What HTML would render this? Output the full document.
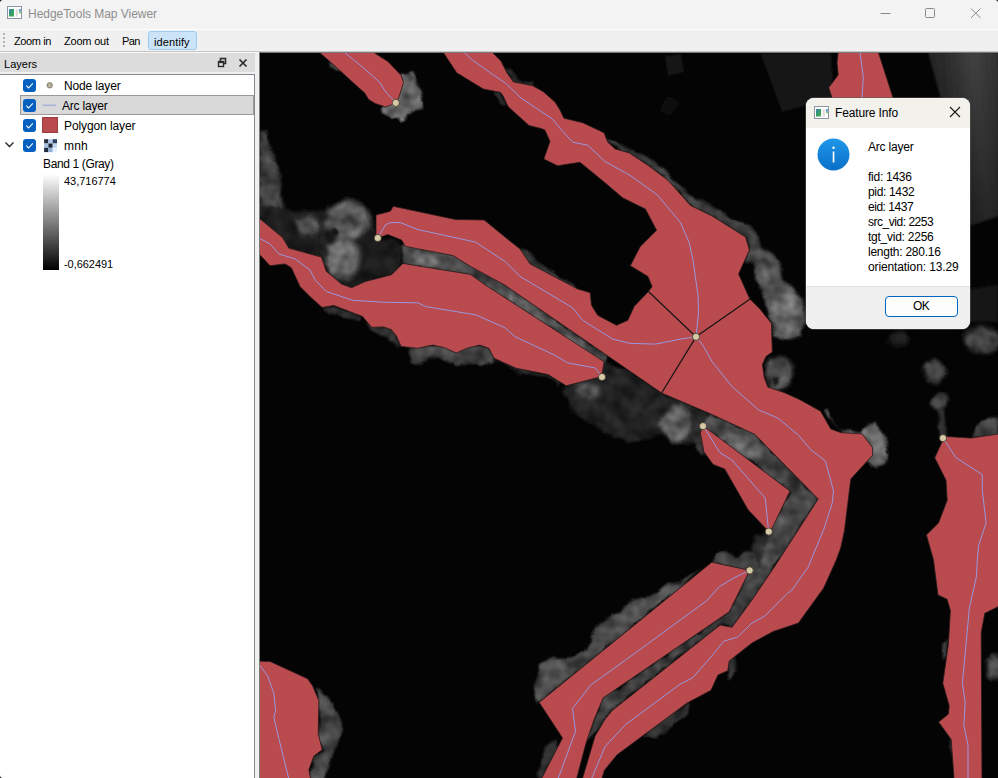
<!DOCTYPE html>
<html><head><meta charset="utf-8">
<style>
html,body{margin:0;padding:0;}
body{width:998px;height:778px;overflow:hidden;background:#f0f0f0;font-family:"Liberation Sans",sans-serif;font-size:12px;color:#000;position:relative;}
.abs{position:absolute;}
.t{position:absolute;white-space:nowrap;line-height:14px;font-size:12px;}#tb1,#tb2,#tb3,#tb4,#lh,#l6,#l7{font-size:11px}
#titlebar{left:0;top:0;width:998px;height:30px;background:#f3f3f3;}
#toolbar{left:0;top:29px;width:998px;height:21px;background:#f0f0f0;border-top:1px solid #fdfdfd;border-bottom:1px solid #c6c6c6;}
#tbsep{left:0;top:52px;width:259px;height:1px;background:#f6f6f6;}
#idbtn{left:148px;top:31px;width:47px;height:17px;background:#cce4f7;border:1px solid #9ccbf0;border-radius:3px;}
#layhdr{left:0;top:53px;width:255px;height:19px;background:#dcdcdc;}
#tree{left:0;top:74px;width:255px;height:706px;background:#fff;border:1px solid #828790;border-left:none;box-sizing:border-box;}
#sel{left:20px;top:95px;width:234px;height:20px;background:#d9d9d9;border:1px solid #9a9a9a;box-sizing:border-box;}
.cb{position:absolute;width:13px;height:13px;background:#0560c0;border-radius:3px;left:23px;}
.cb svg{position:absolute;left:0;top:0;}
#map{left:259px;top:52px;width:739px;height:726px;background:#040404;overflow:hidden;}
#dlg{left:806px;top:98px;width:164px;height:231px;border-radius:8px;background:#fff;overflow:hidden;box-shadow:0 0 0 1px rgba(90,90,90,0.55);}
#dlgtitle{left:0;top:0;width:164px;height:30px;background:#f3f1ec;}
#dlgfoot{left:0;top:188px;width:164px;height:43px;background:#f0f0f0;border-top:1px solid #dfdfdf;}
#okbtn{left:79px;top:198px;width:71px;height:19px;background:#fdfdfd;border:1px solid #0067c0;border-radius:4px;}
/*LS*/#title{letter-spacing:-0.041px}#tb1{letter-spacing:-0.393px}#tb2{letter-spacing:-0.209px}#tb3{letter-spacing:-0.626px}#tb4{letter-spacing:0.105px}#lh{letter-spacing:0.011px}#l1{letter-spacing:-0.143px}#l2{letter-spacing:-0.194px}#l3{letter-spacing:-0.101px}#l4{letter-spacing:0.219px}#l5{letter-spacing:-0.367px}#l6{letter-spacing:-0.022px}#l7{letter-spacing:-0.050px}#dt{letter-spacing:-0.135px}#d0{letter-spacing:-0.194px}#d1{letter-spacing:-0.261px}#d2{letter-spacing:-0.343px}#d3{letter-spacing:-0.466px}#d4{letter-spacing:-0.475px}#d5{letter-spacing:-0.248px}#d6{letter-spacing:-0.248px}#d7{letter-spacing:-0.119px}#ok{letter-spacing:-0.672px}/*ELS*/</style></head><body>
<div id="titlebar" class="abs"></div>
<svg class="abs" style="left:0;top:0" width="4" height="4"><path d="M0 0H3Q0 0 0 3Z" fill="#111"/></svg><svg class="abs" style="left:994px;top:0" width="4" height="4"><path d="M4 0H1Q4 0 4 3Z" fill="#111"/></svg><svg class="abs" style="left:0;top:774px;z-index:5" width="4" height="4"><path d="M0 4H3Q0 4 0 1Z" fill="#111"/></svg>
<svg class="abs" style="left:7px;top:6px" width="15" height="13" viewBox="0 0 15 13">
<defs><linearGradient id="ig" x1="0" y1="0" x2="1" y2="1"><stop offset="0" stop-color="#4a7fc0"/><stop offset="0.45" stop-color="#2f9a6a"/><stop offset="1" stop-color="#4cae50"/></linearGradient></defs>
<rect x="0.5" y="0.5" width="14" height="12" fill="#fff" stroke="#8c95a3"/><rect x="2" y="3" width="5" height="7.5" fill="url(#ig)"/><rect x="8.6" y="3" width="2.2" height="7.5" fill="#dcdcdc"/><rect x="12" y="3" width="1.8" height="4" fill="#5b9bd0"/><rect x="12" y="5.5" width="1.8" height="2" fill="#8ccf7a"/></svg>
<div class="t" id="title" style="left:28px;top:7px;color:#8d8d8d;font-size:12px">HedgeTools Map Viewer</div>
<svg class="abs" style="left:870px;top:0" width="128" height="30" fill="none" stroke="#8a8a8a" stroke-width="1">
<path d="M10.5 13.5H20.5"/><rect x="55.500" y="8.500" width="9" height="9" rx="1"/><path d="M101 8.500L110.500 18M110.500 8.500L101 18"/></svg>
<div id="toolbar" class="abs"></div><div id="tbsep" class="abs"></div>
<svg class="abs" style="left:2px;top:32px" width="4" height="16"><g fill="#b4b4b4"><rect x="1" y="1" width="2" height="2"/><rect x="1" y="5" width="2" height="2"/><rect x="1" y="9" width="2" height="2"/><rect x="1" y="13" width="2" height="2"/></g></svg>
<div id="idbtn" class="abs"></div>
<div class="t" id="tb1" style="left:14px;top:34px">Zoom in</div>
<div class="t" id="tb2" style="left:64px;top:34px">Zoom out</div>
<div class="t" id="tb3" style="left:122px;top:34px">Pan</div>
<div class="t" id="tb4" style="left:154px;top:35px">identify</div>
<div id="layhdr" class="abs"></div>
<div class="t" id="lh" style="left:4px;top:57px">Layers</div>
<svg class="abs" style="left:217px;top:57px" width="32" height="11" fill="none" stroke="#2b2b2b"><rect x="3.500" y="1.500" width="5" height="5" stroke-width="1.600"/><rect x="1.500" y="4.500" width="5" height="5" fill="#dcdcdc" stroke-width="1.400"/><path d="M2 5.300H6" stroke-width="1.600"/><path d="M22.500 2.500L29.500 9.500M29.500 2.500L22.500 9.500" stroke-width="1.700"/></svg>
<div id="tree" class="abs"></div>
<div id="sel" class="abs"></div>
<div class="cb" style="top:79px"><svg width="13" height="13"><path d="M3.300 6.700L5.600 9L9.800 4.300" fill="none" stroke="#fff" stroke-width="1.100"/></svg></div>
<div class="cb" style="top:99px"><svg width="13" height="13"><path d="M3.300 6.700L5.600 9L9.800 4.300" fill="none" stroke="#fff" stroke-width="1.100"/></svg></div>
<div class="cb" style="top:119px"><svg width="13" height="13"><path d="M3.300 6.700L5.600 9L9.800 4.300" fill="none" stroke="#fff" stroke-width="1.100"/></svg></div>
<div class="cb" style="top:139px"><svg width="13" height="13"><path d="M3.300 6.700L5.600 9L9.800 4.300" fill="none" stroke="#fff" stroke-width="1.100"/></svg></div>
<svg class="abs" style="left:4px;top:140px" width="12" height="10"><path d="M1.500 2.500L5.500 6.500L9.500 2.500" fill="none" stroke="#222" stroke-width="1.300"/></svg>
<svg class="abs" style="left:40px;top:76px" width="20" height="78">
<circle cx="9.700" cy="9.300" r="2.700" fill="#b8b095" stroke="#7d7a70" stroke-width="0.900"/>
<path d="M2.500 29.300H16" stroke="#aab2da" stroke-width="1.600"/>
<rect x="2.500" y="41.500" width="15" height="15" fill="#b94a4e" stroke="#9a3c40"/>
<g><rect x="4.100" y="63.200" width="4.300" height="4.300" fill="#243040"/><rect x="8.400" y="63.200" width="4.300" height="4.300" fill="#b0c8e8"/><rect x="12.700" y="63.200" width="4.300" height="4.300" fill="#2a4060"/><rect x="4.100" y="67.500" width="4.300" height="4.300" fill="#a8c0e0"/><rect x="8.400" y="67.500" width="4.300" height="4.300" fill="#1a2535"/><rect x="12.700" y="67.500" width="4.300" height="4.300" fill="#c0d4f0"/><rect x="4.100" y="71.800" width="4.300" height="4.300" fill="#1e2c40"/><rect x="8.400" y="71.800" width="4.300" height="4.300" fill="#90acd8"/><rect x="12.700" y="71.800" width="4.300" height="4.300" fill="#e8f0fc"/></g>
</svg>
<div class="t" id="l1" style="left:64px;top:79px">Node layer</div>
<div class="t" id="l2" style="left:62px;top:99px">Arc layer</div>
<div class="t" id="l3" style="left:64px;top:119px">Polygon layer</div>
<div class="t" id="l4" style="left:64px;top:139px">mnh</div>
<div class="t" id="l5" style="left:43px;top:157px">Band 1 (Gray)</div>
<div class="abs" style="left:43px;top:174px;width:16px;height:96px;background:linear-gradient(#ffffff,#000000)"></div>
<div class="t" id="l6" style="left:64px;top:174px">43,716774</div>
<div class="t" id="l7" style="left:64px;top:257px">-0,662491</div>
<div id="map" class="abs">
<svg id="mapsvg" class="abs" style="left:0;top:0" width="739" height="726" viewBox="259 52 739 726">
<defs>
<filter id="b0_8" x="-20%" y="-20%" width="140%" height="140%"><feGaussianBlur stdDeviation="0.8"/></filter>
<filter id="b0_9" x="-20%" y="-20%" width="140%" height="140%"><feGaussianBlur stdDeviation="0.9"/></filter>
<filter id="b1_0" x="-20%" y="-20%" width="140%" height="140%"><feGaussianBlur stdDeviation="1.0"/></filter>
<filter id="b1_2" x="-20%" y="-20%" width="140%" height="140%"><feGaussianBlur stdDeviation="1.2"/></filter>
<filter id="b1_5" x="-20%" y="-20%" width="140%" height="140%"><feGaussianBlur stdDeviation="1.5"/></filter>
<filter id="b1_6" x="-20%" y="-20%" width="140%" height="140%"><feGaussianBlur stdDeviation="1.6"/></filter>
<filter id="b2_0" x="-20%" y="-20%" width="140%" height="140%"><feGaussianBlur stdDeviation="2.0"/></filter>
<linearGradient id="roof" gradientUnits="userSpaceOnUse" x1="927" y1="60" x2="1010" y2="52"><stop offset="0" stop-color="#242424"/><stop offset="0.25" stop-color="#2e2e2e"/><stop offset="0.55" stop-color="#424242"/><stop offset="0.72" stop-color="#383838"/><stop offset="1" stop-color="#2c2c2c"/></linearGradient><linearGradient id="roofv" x1="0" y1="0" x2="0" y2="1"><stop offset="0" stop-color="#000" stop-opacity="0"/><stop offset="1" stop-color="#000" stop-opacity="0.45"/></linearGradient>
</defs>
<filter id="tex" filterUnits="userSpaceOnUse" x="259" y="52" width="739" height="726" color-interpolation-filters="sRGB"><feTurbulence type="fractalNoise" baseFrequency="0.07" numOctaves="2" seed="7" result="n"/><feColorMatrix in="n" type="matrix" values="1.4 0 0 0 -0.2  1.4 0 0 0 -0.2  1.4 0 0 0 -0.2  0 0 0 0 1" result="g"/><feDisplacementMap in="SourceGraphic" in2="n" scale="7" xChannelSelector="R" yChannelSelector="G" result="d"/><feComposite in="d" in2="g" operator="arithmetic" k1="0.9" k2="0.55" k3="0" k4="0"/></filter>
<polygon points="928,52 999,52 999,216 970,226 958,180 941,99" fill="url(#roof)" filter="url(#b0_8)"/><polygon points="926,52 999,52 999,218 970,228 958,180 939,99" fill="url(#roofv)"/>
<polygon points="760.0,53.0 831.0,53.0 834.0,98.0 782.0,112.0" fill="#121212" filter="url(#b1_0)"/>
<polygon points="665.0,56.0 681.0,54.0 684.0,72.0 668.0,76.0" fill="#141414" filter="url(#b0_8)"/>
<polygon points="668.0,96.0 680.0,102.0 670.0,116.0 659.0,110.0" fill="#111111" filter="url(#b0_8)"/>
<polygon points="965.0,290.0 998.0,285.0 998.0,322.0 968.0,322.0" fill="#181818" filter="url(#b1_5)"/>
<g filter="url(#tex)"><rect x="259" y="52" width="739" height="726" fill="#040404" fill-opacity="0"/>
<polygon points="382.3,107.3 383.0,113.8 390.8,119.0 399.9,117.7 401.2,122.3 405.7,121.6 406.4,113.8 414.2,111.2 422.0,109.9 423.3,104.7 420.7,90.4 415.5,83.9 414.2,72.8 411.0,70.8 406.4,76.0 401.2,74.7 398.0,90.0" fill="#686868" filter="url(#b0_9)"/>
<polygon points="328.0,61.0 332.0,67.0 340.0,72.0 343.0,70.0 336.0,62.0" fill="#3c3c3c" filter="url(#b0_8)"/>
<polygon points="259.0,131.0 266.0,131.0 270.0,150.0 278.0,165.0 281.0,195.0 284.0,208.0 275.0,214.0 259.0,212.0" fill="#444444" filter="url(#b1_5)"/>
<polygon points="259.0,205.0 285.0,207.0 300.0,212.0 325.0,210.0 330.0,262.0 300.0,262.0 259.0,225.0" fill="#1c1c1c" filter="url(#b1_5)"/>
<ellipse cx="308" cy="225" rx="13" ry="10" fill="#505050" filter="url(#b2_0)"/>
<polygon points="322.0,215.0 335.0,203.0 345.0,198.0 360.0,200.0 370.0,210.0 375.0,225.0 376.0,240.0 390.0,238.0 403.0,245.0 400.0,268.0 392.0,276.0 365.0,283.0 350.0,290.0 335.0,283.0 322.0,265.0" fill="#1e1e1e" filter="url(#b1_5)"/>
<ellipse cx="348" cy="221" rx="22" ry="19" fill="#5c5c5c" filter="url(#b2_0)"/>
<ellipse cx="343" cy="258" rx="17" ry="21" fill="#606060" filter="url(#b2_0)"/>
<ellipse cx="334" cy="233" rx="4" ry="3" fill="#1c1c1c" filter="url(#b1_2)"/>
<polygon points="403.0,244.0 455.0,254.0 472.0,265.0 505.0,284.0 608.0,357.0 604.0,364.0 505.0,299.0 486.0,287.0 470.0,276.0 403.0,264.0" fill="#484848" filter="url(#b1_0)"/>
<ellipse cx="426" cy="259" rx="14" ry="6" fill="#666666" filter="url(#b1_5)" transform="rotate(15 426 259)"/>
<ellipse cx="520" cy="303" rx="12" ry="5" fill="#646464" filter="url(#b1_5)" transform="rotate(35 520 303)"/>
<ellipse cx="575" cy="342" rx="12" ry="5" fill="#606060" filter="url(#b1_5)" transform="rotate(35 575 342)"/>
<polygon points="408.0,346.0 412.0,362.0 420.0,365.0 428.0,358.0 436.0,356.0 445.0,360.0 455.0,366.0 470.0,364.0 480.0,366.0 494.0,362.0 496.0,358.0 489.0,346.0" fill="#404040" filter="url(#b1_2)"/>
<polygon points="366.0,322.0 372.0,332.0 385.0,336.0 397.0,344.0 401.0,346.0 396.0,334.0 390.0,328.0" fill="#333333" filter="url(#b1_0)"/>
<polygon points="322.0,307.0 328.0,314.0 345.0,318.0 362.0,321.0 362.0,316.0 334.0,305.0" fill="#2a2a2a" filter="url(#b1_0)"/>
<polygon points="494.0,358.0 520.0,374.0 545.0,378.0 560.0,386.0 560.0,380.0 520.0,368.0" fill="#262626" filter="url(#b1_0)"/>
<polygon points="566.0,386.0 604.0,362.0 628.0,370.0 661.0,392.0 710.0,414.0 703.0,426.0 707.0,458.0 699.0,443.0 672.0,444.0 663.0,434.0 628.0,443.0 573.0,414.0 562.0,390.0" fill="#202020" filter="url(#b1_6)"/>
<ellipse cx="588" cy="390" rx="12" ry="8" fill="#5a5a5a" filter="url(#b2_0)"/>
<ellipse cx="676" cy="424" rx="16" ry="18" fill="#5e5e5e" filter="url(#b2_0)"/>
<polygon points="690.0,417.0 703.0,424.0 704.0,456.0 698.0,450.0 692.0,435.0" fill="#303030" filter="url(#b1_2)"/>
<polygon points="703.0,426.0 710.0,413.5 755.0,434.0 818.0,499.0 759.0,590.0 743.0,590.0 750.0,570.0 769.0,532.0 790.0,491.0" fill="#444444" filter="url(#b1_0)"/>
<ellipse cx="744" cy="446" rx="20" ry="9" fill="#666666" filter="url(#b2_0)" transform="rotate(32 744 446)"/>
<ellipse cx="795" cy="480" rx="8" ry="8" fill="#2a2a2a" filter="url(#b2_0)"/>
<polygon points="755.0,535.0 770.0,532.0 760.0,568.0 748.0,566.0" fill="#262626" filter="url(#b1_5)"/>
<polygon points="712.0,563.0 716.0,555.0 725.0,552.0 735.0,556.0 745.0,552.0 755.0,556.0 760.0,565.0 750.0,571.0" fill="#3c3c3c" filter="url(#b1_0)"/>
<polygon points="822.0,410.0 827.0,407.0 832.0,420.0 840.0,430.0 862.0,432.0 865.0,425.0 875.0,424.0 880.0,430.0 886.0,438.0 889.0,455.0 885.0,465.0 876.0,468.0 868.0,462.0" fill="#5c5c5c" filter="url(#b1_0)"/>
<ellipse cx="940" cy="400" rx="8" ry="8" fill="#3c3c3c" filter="url(#b1_5)"/>
<polygon points="937.0,408.0 944.0,408.0 946.0,436.0 940.0,436.0" fill="#333333" filter="url(#b1_0)"/>
<polygon points="972.0,438.0 978.0,425.0 988.0,418.0 999.0,415.0 999.0,438.0" fill="#3c3c3c" filter="url(#b1_2)"/>
<polygon points="606.0,138.0 614.0,140.0 622.0,146.0 632.0,148.0 650.0,160.0 665.0,168.0 672.0,178.0 688.0,194.0 700.0,200.0 718.0,210.0 730.0,218.0 745.0,226.0 752.0,238.0 748.0,240.0 713.0,217.0 690.0,205.0 668.0,180.0 648.0,165.0 629.0,153.0 615.0,149.0 608.0,142.0" fill="#3c3c3c" filter="url(#b0_9)"/>
<polygon points="735.0,222.0 750.0,225.0 758.0,235.0 762.0,250.0 756.0,264.0 745.0,264.0 750.0,250.0 746.0,237.0 720.0,220.0" fill="#3a3a3a" filter="url(#b1_0)"/>
<polygon points="753.0,252.0 762.0,248.0 772.0,252.0 780.0,262.0 782.0,280.0 792.0,286.0 803.0,300.0 806.0,320.0 800.0,336.0 788.0,340.0 775.0,334.0 768.0,318.0 766.0,300.0 760.0,286.0 754.0,272.0" fill="#505050" filter="url(#b1_5)"/>
<ellipse cx="786" cy="312" rx="14" ry="19" fill="#6c6c6c" filter="url(#b2_0)"/>
<ellipse cx="768" cy="266" rx="8" ry="10" fill="#5c5c5c" filter="url(#b2_0)"/>
<ellipse cx="779" cy="373" rx="14" ry="17" fill="#505050" filter="url(#b2_0)"/>
<ellipse cx="776" cy="380" rx="4" ry="4" fill="#1a1a1a" filter="url(#b1_0)"/>
<polygon points="518.0,247.0 530.0,250.0 535.0,262.0 560.0,276.0 578.0,287.0 575.0,291.0 540.0,273.0 528.0,267.0" fill="#383838" filter="url(#b0_8)"/>
<polygon points="506.0,66.0 512.0,70.0 518.0,80.0 534.0,83.0 533.0,88.0 513.0,84.0" fill="#2c2c2c" filter="url(#b0_8)"/>
<polygon points="492.0,91.0 500.0,92.0 506.0,104.0 503.0,106.0 497.0,98.0" fill="#2c2c2c" filter="url(#b0_8)"/>
<ellipse cx="982" cy="340" rx="18" ry="13" fill="#464646" filter="url(#b2_0)"/>
<ellipse cx="935" cy="372" rx="11" ry="11" fill="#4a4a4a" filter="url(#b2_0)"/>
<ellipse cx="898" cy="339" rx="12" ry="8" fill="#1c1c1c" filter="url(#b2_0)"/>
<polygon points="316.0,688.0 322.0,690.0 330.0,700.0 338.0,715.0 343.0,730.0 336.0,745.0 330.0,760.0 325.0,779.0 310.0,779.0 314.0,756.0 322.0,750.0 318.0,733.0 319.0,700.0" fill="#4a4a4a" filter="url(#b1_0)"/>
<polygon points="539.0,703.0 711.0,562.0 695.4,573.8 680.4,581.4 665.4,585.1 655.3,595.1 640.3,597.6 627.8,602.7 620.3,612.7 610.2,615.2 595.2,626.5 591.4,640.3 585.2,651.5 570.1,657.8 550.1,657.8 540.1,665.3 532.5,682.9 535.0,696.6" fill="#484848" filter="url(#b0_9)"/>
<polygon points="603.0,698.0 729.0,612.0 750.0,571.0 760.0,590.0 752.0,600.0 732.0,627.0 720.0,625.0 610.0,711.0 597.0,731.0 586.0,742.0 594.0,720.0" fill="#3c3c3c" filter="url(#b1_0)"/>
<polygon points="650.0,725.0 690.0,702.0 688.0,715.0 670.0,728.0 655.0,738.0 645.0,735.0" fill="#333333" filter="url(#b1_0)"/>
<polygon points="727.0,660.0 734.0,655.0 736.0,672.0 730.0,680.0" fill="#333333" filter="url(#b1_0)"/>
<polygon points="545.0,745.0 556.0,740.0 560.0,750.0 548.0,779.0 538.0,779.0" fill="#2e2e2e" filter="url(#b1_2)"/>
<ellipse cx="995" cy="667" rx="8" ry="12" fill="#444444" filter="url(#b2_0)"/>
<polygon points="942.0,644.0 948.0,640.0 947.0,655.0 943.0,660.0" fill="#3a3a3a" filter="url(#b0_8)"/>
<polygon points="950.0,740.0 955.0,735.0 956.0,760.0 952.0,762.0" fill="#3a3a3a" filter="url(#b0_8)"/>
</g>
<g fill="#b94a4e" stroke="#2a1a1a" stroke-width="0.8" stroke-linejoin="round">
<polygon points="319.0,52.0 336.0,66.9 353.0,82.6 364.7,93.0 368.6,99.5 375.1,103.4 385.6,107.0 392.0,104.7 396.0,102.8 398.6,98.2 403.5,82.6 401.2,75.4 388.2,61.7 373.0,52.0"/>
<polygon points="492.0,52.0 501.0,61.1 506.9,72.8 513.4,81.9 532.9,85.8 543.3,91.7 555.0,102.1 560.0,109.9 563.9,118.2 582.7,122.7 604.0,132.7 607.8,142.2 615.3,149.0 629.0,152.8 647.9,165.3 668.0,180.3 690.5,205.4 713.0,216.5 745.6,237.0 749.4,250.1 738.6,273.9 749.8,298.9 759.7,308.8 771.4,323.2 772.3,352.0 766.0,356.5 762.4,364.6 764.2,377.2 767.8,387.1 784.0,392.5 800.0,399.7 820.7,411.3 830.7,428.9 840.7,432.6 862.0,433.9 872.6,447.7 872.6,455.2 850.8,479.0 844.5,530.4 840.7,547.9 836.3,560.0 823.7,588.0 798.4,623.1 773.2,631.5 752.0,643.0 729.2,660.9 727.8,670.7 718.0,674.9 711.0,690.3 687.2,702.9 617.1,754.8 604.5,770.2 601.7,779.0 582.3,779.0 595.2,735.8 605.1,719.2 611.9,710.8 720.2,625.0 732.0,627.3 752.0,600.0 775.0,566.0 818.2,499.0 754.8,434.3 709.7,413.5 661.6,393.0 505.0,285.2 470.5,266.4 453.0,255.6 405.4,246.4 401.6,240.1 387.8,234.6 378.0,238.0 376.0,235.0 376.0,215.0 390.3,211.3 393.3,206.3 455.5,219.5 484.3,220.0 505.0,237.0 520.0,248.9 530.0,263.9 577.7,289.0 590.2,292.7 591.5,305.3 597.7,315.3 616.5,325.3 627.8,320.3 634.1,306.5 648.4,291.5 652.1,286.5 647.9,276.4 630.3,265.7 640.3,246.4 656.6,230.2 645.4,209.1 622.8,197.9 605.0,182.8 580.0,162.3 557.6,165.8 543.8,159.0 550.0,141.5 545.0,130.2 542.0,128.8 529.0,125.5 508.2,106.7 502.9,95.6 500.3,92.3 483.4,89.1 456.7,72.8 443.0,52.0"/>
<polygon points="259.0,218.0 282.6,237.6 288.8,248.1 321.4,257.1 326.4,271.4 341.5,284.0 351.5,287.7 365.3,281.5 391.6,274.7 402.9,263.4 470.5,274.4 485.6,285.2 505.0,297.7 604.2,361.8 601.6,376.6 566.2,385.8 548.1,374.6 516.0,368.2 494.1,358.2 488.9,348.3 479.8,345.1 466.8,348.3 456.3,353.0 444.6,347.7 432.9,345.1 417.2,348.3 401.1,346.4 396.4,336.0 391.2,329.5 383.4,326.9 371.7,327.4 362.5,316.5 333.9,305.5 322.1,307.4 310.4,297.0 300.0,286.5 291.3,267.7 285.0,263.9 270.0,265.7 259.0,253.9"/>
<polygon points="838.2,52.0 837.0,62.5 838.2,75.0 828.7,87.6 832.0,98.0 835.0,110.0 897.0,110.0 878.3,52.0"/>
<polygon points="703.0,425.7 790.0,491.0 772.2,528.0 768.7,532.0 766.4,529.2 747.9,509.5 724.7,469.0 713.1,464.4 703.9,451.7 700.4,433.1"/>
<polygon points="711.8,562.2 749.7,570.4 729.2,611.8 603.1,697.9 594.0,719.8 586.3,742.2 576.5,779.0 541.4,779.0 562.5,738.0 539.2,702.4"/>
<polygon points="943.0,438.1 946.0,436.4 971.0,438.1 999.0,433.9 999.0,606.2 984.8,613.3 981.2,632.9 982.0,779.0 954.0,779.0 951.2,739.4 938.6,722.0 948.4,714.1 949.2,705.7 942.8,683.3 948.4,644.1 950.4,610.4 947.0,599.2 938.0,595.0 935.0,572.0 933.5,560.0 926.4,534.9 938.5,522.9 947.2,500.3 946.0,480.3 934.7,457.7 942.0,442.0"/>
<polygon points="259.0,661.2 270.0,661.4 307.6,678.7 312.6,685.8 318.9,700.8 318.2,733.4 322.2,749.7 313.9,755.9 308.9,769.7 310.6,779.0 259.0,779.0"/>
</g>
<g fill="none" stroke="#1a1414" stroke-width="1.25">
<polyline points="648.4,291.5 696.0,336.8"/>
<polyline points="696.0,336.8 750.1,299.0"/>
<polyline points="696.0,336.8 661.6,393.0"/>
</g>
<g fill="none" stroke="#9a98dc" stroke-width="1" stroke-linejoin="round">
<polyline points="344.0,52.0 363.0,67.5 380.0,82.5 385.0,91.0 395.8,102.9"/>
<polyline points="463.6,52.0 473.0,60.4 491.2,73.4 505.6,83.2 521.2,98.2 536.8,108.6 552.4,119.0 560.0,128.2 572.7,142.2 587.7,145.2 605.0,161.5 630.0,175.3 657.9,195.4 661.6,200.0 680.5,222.6 689.2,242.6 693.0,260.2 698.0,295.2 698.5,312.8 696.0,336.8"/>
<polyline points="377.8,238.0 385.3,225.0 390.3,222.6 400.4,222.6 417.9,229.6 475.6,242.1 505.0,261.4 520.0,276.4 572.7,307.8 582.7,320.3 612.8,339.1 630.3,343.4 655.4,344.1 680.5,339.1 696.0,336.8"/>
<polyline points="259.0,238.1 270.0,243.9 278.8,253.9 295.0,258.9 310.1,270.2 315.2,280.2 326.4,291.5 352.7,300.3 385.3,302.3 417.9,302.8 425.4,306.5 475.6,314.8 505.0,327.8 515.0,336.6 555.1,355.4 567.7,362.9 595.2,367.9 602.0,377.0"/>
<polyline points="696.0,336.8 703.0,345.4 712.2,361.8 731.8,386.3 758.7,410.0 778.0,418.1 798.8,435.5 810.4,449.4 825.4,460.9 833.5,491.0 832.4,502.6 824.3,528.0 808.0,567.4 791.9,590.0 787.2,593.6 764.8,616.1 752.0,623.0 737.6,637.1 723.6,641.3 712.4,655.3 692.8,677.7 680.0,684.3 625.6,724.5 605.1,746.5 591.4,779.0"/>
<polyline points="860.0,52.0 863.3,77.6 862.0,98.0 862.0,110.0"/>
<polyline points="703.0,425.7 720.0,452.8 731.7,459.8 765.2,498.0 768.7,532.0"/>
<polyline points="749.7,570.4 734.0,577.8 719.4,586.6 706.8,600.6 625.6,660.0 590.7,685.0 572.5,708.5 575.5,731.3 558.0,779.0"/>
<polyline points="943.0,438.1 956.0,457.7 982.3,474.7 982.3,490.3 986.1,522.9 978.6,545.4 977.3,560.0 976.4,576.8 969.4,607.6 962.4,683.3 965.2,702.9 963.8,725.4 968.0,745.0 968.0,779.0"/>
<polyline points="259.0,664.5 267.5,675.7 273.8,693.3 275.6,710.8 273.8,717.1 278.8,738.4 288.8,779.0"/>
</g>
<g fill="#d6caa6" stroke="#3a3228" stroke-width="0.8">
<circle cx="395.8" cy="102.9" r="3.6"/>
<circle cx="377.8" cy="238.0" r="3.6"/>
<circle cx="696.0" cy="336.8" r="3.6"/>
<circle cx="602.0" cy="377.0" r="3.6"/>
<circle cx="703.0" cy="426.1" r="3.6"/>
<circle cx="768.8" cy="531.6" r="3.6"/>
<circle cx="749.7" cy="570.4" r="3.6"/>
<circle cx="943.0" cy="438.1" r="3.6"/>
</g>
</svg>
<div class="abs" style="left:0;top:0;width:1px;height:726px;background:#7a7a7a"></div>
<div class="abs" style="left:0;top:0;width:739px;height:1px;background:#7a7a7a"></div>
</div>
<div id="dlg" class="abs">
<div id="dlgtitle" class="abs"></div>
<svg class="abs" style="left:8px;top:8px" width="15" height="13" viewBox="0 0 15 13"><rect x="0.5" y="0.5" width="14" height="12" fill="#fff" stroke="#8c95a3"/><rect x="2" y="3" width="5" height="7.5" fill="url(#ig)"/><rect x="8.6" y="3" width="2.200" height="7.500" fill="#dcdcdc"/><rect x="12" y="3" width="1.800" height="4" fill="#5b9bd0"/><rect x="12" y="5.500" width="1.800" height="2" fill="#8ccf7a"/></svg>
<div class="t" id="dt" style="left:29px;top:8px">Feature Info</div>
<svg class="abs" style="left:142px;top:7px" width="14" height="14"><path d="M2 2L12 12M12 2L2 12" stroke="#1a1a1a" stroke-width="1.100" fill="none"/></svg>
<svg class="abs" style="left:11px;top:40px" width="33" height="33"><defs><linearGradient id="bg" x1="0" y1="0" x2="0" y2="1"><stop offset="0" stop-color="#1f97e8"/><stop offset="1" stop-color="#0a6fc8"/></linearGradient></defs><circle cx="16.500" cy="16.500" r="16" fill="url(#bg)"/><rect x="15.700" y="13.500" width="1.700" height="11" fill="#fff"/><circle cx="16.500" cy="9.800" r="1.200" fill="#fff"/></svg>
<div class="t" id="d0" style="left:62px;top:42px">Arc layer</div>
<div class="t" id="d1" style="left:62px;top:72px;line-height:15px">fid: 1436</div>
<div class="t" id="d2" style="left:62px;top:87px;line-height:15px">pid: 1432</div>
<div class="t" id="d3" style="left:62px;top:102px;line-height:15px">eid: 1437</div>
<div class="t" id="d4" style="left:62px;top:117px;line-height:15px">src_vid: 2253</div>
<div class="t" id="d5" style="left:62px;top:132px;line-height:15px">tgt_vid: 2256</div>
<div class="t" id="d6" style="left:62px;top:147px;line-height:15px">length: 280.16</div>
<div class="t" id="d7" style="left:62px;top:162px;line-height:15px">orientation: 13.29</div>
<div id="dlgfoot" class="abs"></div>
<div id="okbtn" class="abs"></div>
<div class="t" id="ok" style="left:107px;top:201px">OK</div>
</div>
</body></html>
